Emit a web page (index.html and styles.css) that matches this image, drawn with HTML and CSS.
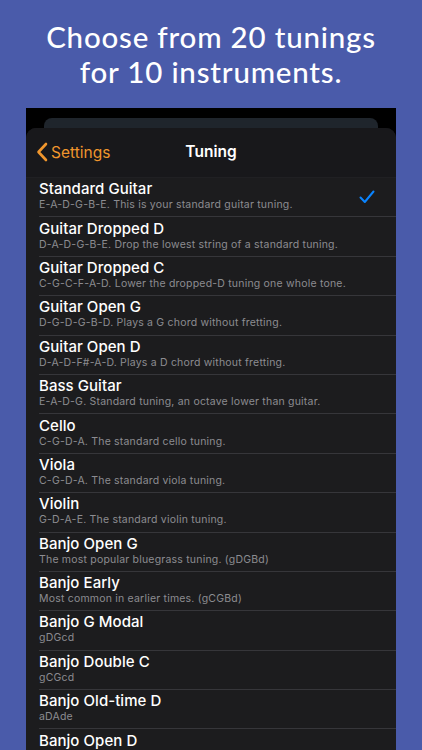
FILE: index.html
```html
<!DOCTYPE html>
<html>
<head>
<meta charset="utf-8">
<link rel="stylesheet" href="styles.css">
</head>
<body>
<div class="page">
  <h1 class="headline">Choose from 20 tunings<br>for 10 instruments.</h1>
  <div class="phone">
    <div class="backcard"></div>
    <div class="sheet">
      <div class="nav">
        <div class="back">
          <svg class="chev" width="12" height="20" viewBox="0 0 12 20"><path d="M10 2 L2.5 10 L10 18" fill="none" stroke="#f0962d" stroke-width="2.6" stroke-linecap="round" stroke-linejoin="round"/></svg>
          <span>Settings</span>
        </div>
        <div class="title">Tuning</div>
      </div>
      <ul class="list">
        <li class="row"><div class="txt"><div class="name">Standard Guitar</div><div class="desc">E-A-D-G-B-E. This is your standard guitar tuning.</div></div>
          <svg class="check" width="16" height="14" viewBox="0 0 16 14"><path d="M1.5 7.5 L5.8 12 L14.5 1.5" fill="none" stroke="#0a84ff" stroke-width="2" stroke-linecap="round" stroke-linejoin="round"/></svg></li>
        <li class="row"><div class="txt"><div class="name">Guitar Dropped D</div><div class="desc">D-A-D-G-B-E. Drop the lowest string of a standard tuning.</div></div></li>
        <li class="row"><div class="txt"><div class="name">Guitar Dropped C</div><div class="desc">C-G-C-F-A-D. Lower the dropped-D tuning one whole tone.</div></div></li>
        <li class="row"><div class="txt"><div class="name">Guitar Open G</div><div class="desc">D-G-D-G-B-D. Plays a G chord without fretting.</div></div></li>
        <li class="row"><div class="txt"><div class="name">Guitar Open D</div><div class="desc">D-A-D-F#-A-D. Plays a D chord without fretting.</div></div></li>
        <li class="row"><div class="txt"><div class="name">Bass Guitar</div><div class="desc">E-A-D-G. Standard tuning, an octave lower than guitar.</div></div></li>
        <li class="row"><div class="txt"><div class="name">Cello</div><div class="desc">C-G-D-A. The standard cello tuning.</div></div></li>
        <li class="row"><div class="txt"><div class="name">Viola</div><div class="desc">C-G-D-A. The standard viola tuning.</div></div></li>
        <li class="row"><div class="txt"><div class="name">Violin</div><div class="desc">G-D-A-E. The standard violin tuning.</div></div></li>
        <li class="row"><div class="txt"><div class="name">Banjo Open G</div><div class="desc">The most popular bluegrass tuning. (gDGBd)</div></div></li>
        <li class="row"><div class="txt"><div class="name">Banjo Early</div><div class="desc">Most common in earlier times. (gCGBd)</div></div></li>
        <li class="row"><div class="txt"><div class="name">Banjo G Modal</div><div class="desc">gDGcd</div></div></li>
        <li class="row"><div class="txt"><div class="name">Banjo Double C</div><div class="desc">gCGcd</div></div></li>
        <li class="row"><div class="txt"><div class="name">Banjo Old-time D</div><div class="desc">aDAde</div></div></li>
        <li class="row"><div class="txt"><div class="name">Banjo Open D</div><div class="desc desc-empty"></div></div></li>
      </ul>
    </div>
  </div>
</div>
</body>
</html>
```
FILE: styles.css
```css
html, body {
  margin: 0;
  padding: 0;
  background: #4a5baa;
}
.page {
  width: 422px;
  height: 750px;
  overflow: hidden;
  background: #4a5baa;
}
.headline {
  margin: 0;
  height: 108px;
  box-sizing: border-box;
  padding-top: 19px;
  text-align: center;
  color: #ffffff;
  font-family: "Lato", "Noto Sans", sans-serif;
  font-weight: 500;
  font-size: 29.5px;
  line-height: 35px;
  letter-spacing: 0.8px;
}
.phone {
  margin-left: 26px;
  width: 370px;
  background: #000000;
  padding-top: 10px;
  height: 642px;
  box-sizing: border-box;
}
.backcard {
  margin: 0 18px;
  height: 10px;
  background: #1f252c;
  border-radius: 8px 8px 0 0;
}
.sheet {
  background: #1c1c1e;
  border-radius: 10px 10px 0 0;
  overflow: hidden;
  font-family: "Inter", "Roboto", sans-serif;
}
.nav {
  height: 49px;
  background: #18181b;
  display: flex;
  align-items: center;
  justify-content: center;
  position: relative;
  border-bottom: 1px solid #202023;
}
.back {
  position: absolute;
  left: 10px;
  top: 14px;
  display: flex;
  align-items: center;
  gap: 3px;
  color: #f0962d;
  font-size: 15.5px;
}
.chev { display: block; }
.title {
  color: #ffffff;
  font-size: 15.5px;
  font-weight: 600;
  margin-top: -2px;
}
.list {
  list-style: none;
  margin: 0;
  padding: 0;
}
.row {
  height: 39.4px;
  box-sizing: border-box;
  display: flex;
  align-items: center;
  margin-left: 13px;
  padding-right: 21px;
  border-bottom: 0.6px solid #36363a;
  position: relative;
}
.txt { flex: 1; }
.name {
  color: #ffffff;
  font-size: 15px;
  font-weight: 500;
  line-height: 18px;
  margin-top: -3px;
  letter-spacing: 0.05px;
}
.desc {
  color: #8c8c91;
  font-size: 10.5px;
  line-height: 13px;
  letter-spacing: 0.2px;
}
.desc-empty { height: 13px; }
.check { display: block; }
```
